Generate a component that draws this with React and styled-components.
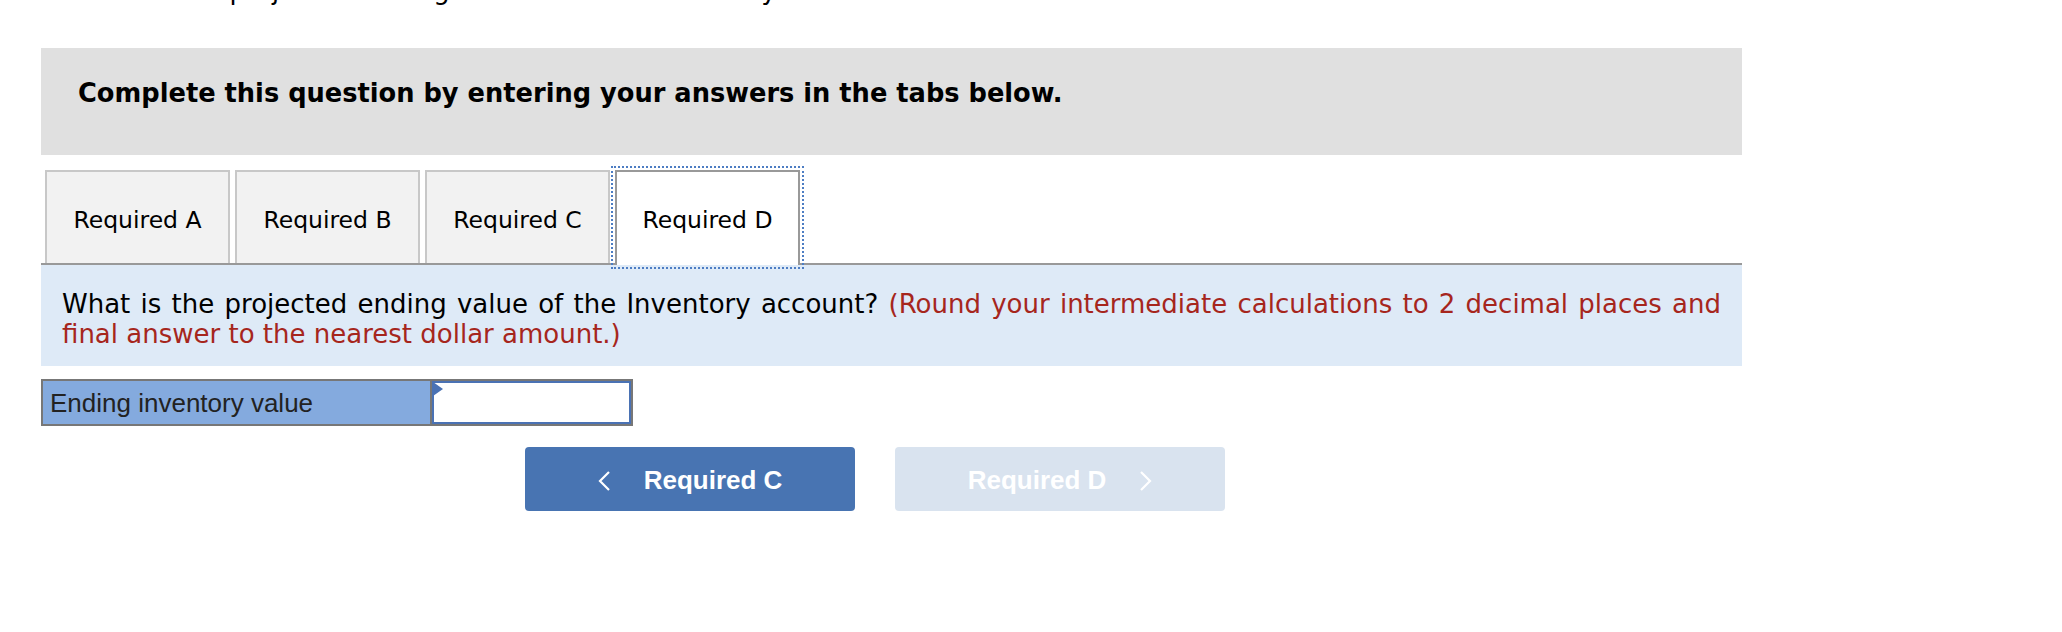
import React from 'react';
import styled, { createGlobalStyle } from 'styled-components';

const GlobalStyle = createGlobalStyle`
  body {
    margin: 0;
    background: #fff;
    font-family: "DejaVu Sans", Verdana, sans-serif;
  }
`;

const Page = styled.div`
  width: 1701px;
  padding-left: 41px;
`;

// the previous line of the question, cut off at the top of the shot
const CutLine = styled.div`
  height: 12px;
  overflow: hidden;
  padding-left: 32px;
`;

const CutText = styled.div`
  margin-top: -25px;
  font-size: 26px;
  line-height: 30px;
  white-space: nowrap;
  color: #000;
`;

const Instructions = styled.div`
  margin-top: 36px;
  padding: 30px 37px 46px;
  background: #e0e0e0;
  font-size: 25.7px;
  font-weight: bold;
  line-height: 31px;
  color: #000;
`;

const TabBar = styled.div`
  margin-top: 15px;
  display: flex;
  gap: 5px;
  padding-left: 4px;
  border-bottom: 2px solid #999;
`;

const Tab = styled.div`
  box-sizing: border-box;
  width: 185px;
  height: ${(p) => (p.$active ? '95px' : '93px')};
  margin-bottom: ${(p) => (p.$active ? '-2px' : '0')};
  display: flex;
  align-items: center;
  justify-content: center;
  border: 2px solid ${(p) => (p.$active ? '#999' : '#c8c8c8')};
  border-bottom: none;
  background: ${(p) => (p.$active ? '#fff' : '#f2f2f2')};
  outline: ${(p) => (p.$active ? '2px dotted #4d7dc3' : 'none')};
  outline-offset: 2px;
  font-size: 23.5px;
  color: #000;
  padding-top: ${(p) => (p.$active ? '2px' : '4px')};
`;

const Question = styled.div`
  padding: 24px 21px 17px;
  background: #deeaf7;
  font-size: 26px;
  line-height: 30px;
  text-align: justify;
  color: #000;
`;

const Hint = styled.span`
  color: #a6261d;
`;

const AnswerRow = styled.div`
  margin-top: 13px;
  display: inline-flex;
  border: 2px solid #777;
`;

const LabelCell = styled.div`
  width: 380px;
  height: 43px;
  padding-left: 7px;
  background: #84aade;
  border-right: 2px solid #777;
  font-family: "Liberation Sans", Arial, sans-serif;
  font-size: 26px;
  line-height: 45px;
  color: #222;
`;

const InputCell = styled.div`
  position: relative;
  width: 199px;
  height: 43px;
`;

const AnswerInput = styled.input`
  box-sizing: border-box;
  width: 100%;
  height: 100%;
  margin: 0;
  border: 2px solid #4a72b4;
  background: #fff;
  outline: none;
`;

const Marker = styled.span`
  position: absolute;
  left: 1px;
  top: 1px;
  width: 0;
  height: 0;
  border-left: 10px solid #4a72b4;
  border-top: 7px solid transparent;
  border-bottom: 7px solid transparent;
`;

const NavRow = styled.div`
  margin-top: 21px;
  padding-left: 484px;
  display: flex;
  gap: 40px;
`;

const NavButton = styled.button`
  width: 330px;
  height: 64px;
  display: flex;
  align-items: center;
  justify-content: center;
  gap: 34px;
  border: none;
  border-radius: 4px;
  background: ${(p) => (p.$disabled ? '#d9e3ef' : '#4874b2')};
  color: #fff;
  font-family: "Liberation Sans", Arial, sans-serif;
  font-size: 26px;
  font-weight: bold;
  padding: 3px 0 0;
`;

const Chevron = ({ dir }) => (
  <svg width="12" height="20" viewBox="0 0 12 20">
    <polyline
      points={dir === 'left' ? '11,1 2,10 11,19' : '1,1 10,10 1,19'}
      fill="none"
      stroke="#fff"
      strokeWidth="2.2"
    />
  </svg>
);

export default function App() {
  const tabs = ['Required A', 'Required B', 'Required C', 'Required D'];

  return (
    <Page>
      <GlobalStyle />
      <CutLine>
        <CutText>What is the projected ending balance of the inventory account?</CutText>
      </CutLine>
      <Instructions>Complete this question by entering your answers in the tabs below.</Instructions>
      <TabBar>
        {tabs.map((t) => (
          <Tab key={t} $active={t === 'Required D'}>{t}</Tab>
        ))}
      </TabBar>
      <Question>
        What is the projected ending value of the Inventory account?{' '}
        <Hint>(Round your intermediate calculations to 2 decimal places and final answer to the nearest dollar amount.)</Hint>
      </Question>
      <AnswerRow>
        <LabelCell>Ending inventory value</LabelCell>
        <InputCell>
          <AnswerInput type="text" />
          <Marker />
        </InputCell>
      </AnswerRow>
      <NavRow>
        <NavButton>
          <Chevron dir="left" />
          Required C
        </NavButton>
        <NavButton $disabled>
          Required D
          <Chevron dir="right" />
        </NavButton>
      </NavRow>
    </Page>
  );
}
